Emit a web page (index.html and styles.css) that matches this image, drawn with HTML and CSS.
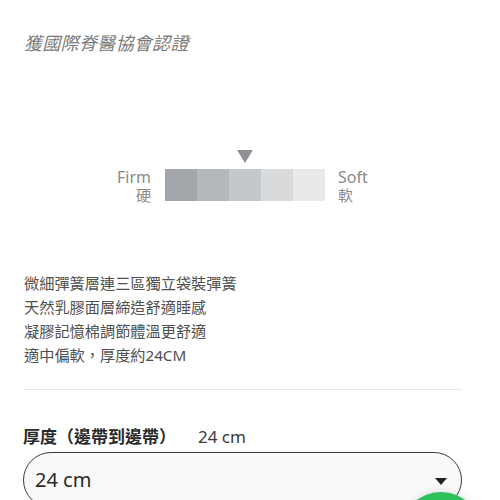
FILE: index.html
```html
<!DOCTYPE html>
<html lang="zh-Hant">
<head>
<meta charset="utf-8">
<link rel="stylesheet" href="styles.css">
</head>
<body>
<main class="page">
  <h2 class="cert">獲國際脊醫協會認證</h2>

  <section class="scale">
    <div class="scale-label left"><span>Firm</span><span>硬</span></div>
    <div class="scale-track">
      <div class="indicator-row"><span class="indicator"></span></div>
      <div class="bar">
        <span class="seg s1"></span><span class="seg s2"></span><span class="seg s3"></span><span class="seg s4"></span><span class="seg s5"></span>
      </div>
    </div>
    <div class="scale-label right"><span>Soft</span><span>軟</span></div>
  </section>

  <ul class="features">
    <li>微細彈簧層連三區獨立袋裝彈簧</li>
    <li>天然乳膠面層締造舒適睡感</li>
    <li>凝膠記憶棉調節體溫更舒適</li>
    <li>適中偏軟，厚度約24CM</li>
  </ul>

  <hr class="divider">

  <div class="option-head">
    <span class="option-name">厚度（邊帶到邊帶）</span>
    <span class="option-value">24 cm</span>
  </div>
  <div class="select">
    <span class="select-text">24 cm</span>
    <span class="caret"></span>
  </div>
</main>
<div class="fab"></div>
</body>
</html>
```
FILE: styles.css
```css
* { box-sizing: border-box; }
html, body { margin: 0; padding: 0; background: #fff; }
body {
  font-family: "Noto Sans", "Noto Sans CJK TC", sans-serif;
  width: 500px;
  height: 500px;
  overflow: hidden;
}
.page {
  padding: 31px 38px 0 23px;
}
.cert {
  margin: 0 0 0 1px;
  font-size: 18px;
  line-height: 24px;
  font-weight: 400;
  font-style: italic;
  color: #7a7a7a;
  letter-spacing: 0.3px;
}
.scale {
  margin-top: 95px;
  display: flex;
  align-items: flex-end;
  padding-left: 94px;
}
.scale-label {
  display: flex;
  flex-direction: column;
  font-size: 16px;
  line-height: 16px;
  color: #8a8a8a;
  height: 34px;
  justify-content: space-between;
  margin-bottom: -2px;
}
.scale-label span:last-child { font-size: 15px; line-height: 16px; }
.scale-label.left { align-items: flex-end; margin-right: 14px; }
.scale-label.right { align-items: flex-start; margin-left: 13px; }
.scale-track {
  display: flex;
  flex-direction: column;
}
.indicator-row {
  height: 19px;
  padding-left: 72px;
}
.indicator {
  display: block;
  width: 0;
  height: 0;
  border-left: 8px solid transparent;
  border-right: 8px solid transparent;
  border-top: 13px solid #8e9297;
}
.bar {
  display: flex;
  height: 32px;
}
.seg { width: 32px; height: 32px; }
.s1 { background: #a3a7ab; }
.s2 { background: #b4b8bc; }
.s3 { background: #c5c8cb; }
.s4 { background: #d8dadc; }
.s5 { background: #e8e9ea; }
.features {
  list-style: none;
  margin: 70px 0 0 1px;
  padding: 0;
  font-size: 15.2px;
  line-height: 24px;
  color: #505050;
}
.divider {
  margin: 22px 0 0;
  border: 0;
  height: 1px;
  background: #e6e6e6;
}
.option-head {
  margin-top: 35px;
  display: flex;
  align-items: baseline;
  height: 26px;
  line-height: 24px;
}
.option-name {
  font-size: 17px;
  font-weight: 700;
  color: #2a2a2a;
}
.option-value {
  margin-left: 22px;
  font-size: 17px;
  color: #3a3a3a;
}
.select {
  margin-top: 1px;
  height: 56px;
  border: 1.5px solid #3a3a3a;
  border-radius: 28px;
  background: #fafafa;
  display: flex;
  align-items: center;
  justify-content: space-between;
  padding: 0 14px 0 11px;
}
.select-text {
  font-size: 20px;
  color: #2a2a2a;
  line-height: 24px;
}
.caret {
  width: 0;
  height: 0;
  border-left: 6px solid transparent;
  border-right: 6px solid transparent;
  border-top: 7px solid #222;
  margin-top: 2px;
}
.fab {
  position: fixed;
  left: 401px;
  top: 492px;
  width: 80px;
  height: 80px;
  border-radius: 50%;
  background: #2bc25b;
  box-shadow: 0 0 8px rgba(0,0,0,0.15);
}
```
